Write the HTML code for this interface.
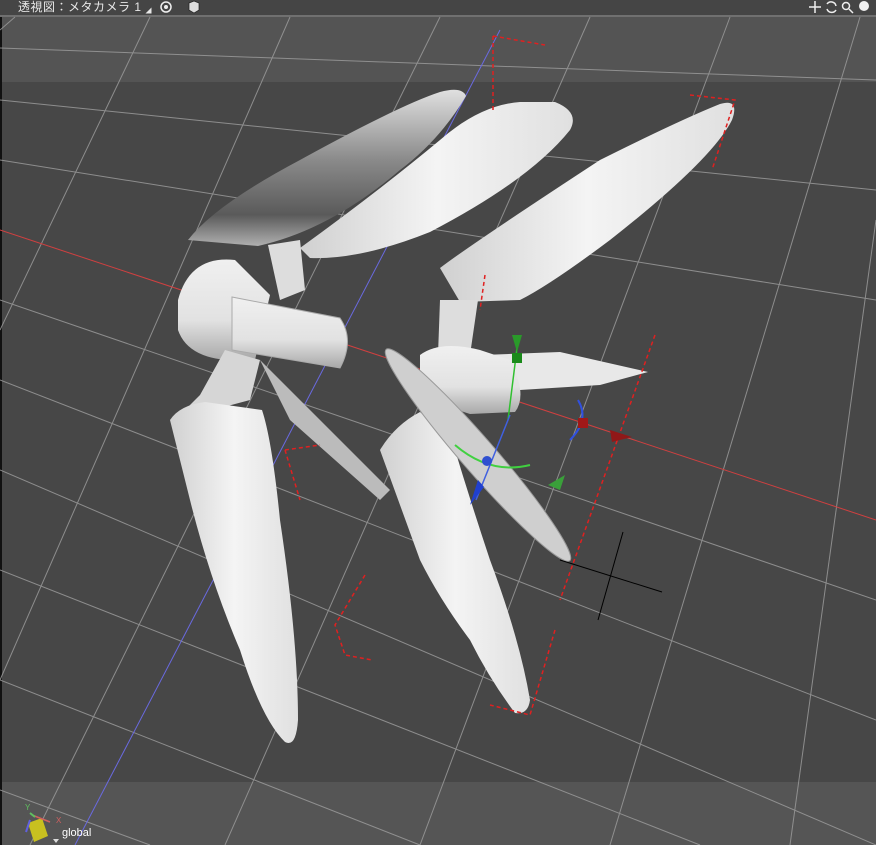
<!DOCTYPE html>
<html><head><meta charset="utf-8"><style>
html,body{margin:0;padding:0;width:876px;height:845px;overflow:hidden;background:#474747;font-family:"Liberation Sans","Noto Sans CJK JP",sans-serif}
#bar{position:absolute;left:0;top:0;width:876px;height:15px;background:#454545;border-bottom:2px solid #707070}
#bar .t{position:absolute;left:18px;top:0;font-size:12px;color:#e8e8e8;line-height:14px;letter-spacing:0.5px}
#bar .s{font-size:6px;vertical-align:-2px;margin-left:4px}
svg{position:absolute;left:0;top:0}
#g{position:absolute;left:62px;top:827px;color:#fff;font-size:11px}
</style></head><body>
<div id="bar"><span class="t">透視図：メタカメラ 1<span class="s">◢</span></span></div>
<svg width="876" height="845" viewBox="0 0 876 845">
<defs>
<linearGradient id="dk" x1="0" y1="0" x2="0" y2="1"><stop offset="0" stop-color="#e0e0e0"/><stop offset=".45" stop-color="#8a8a8a"/><stop offset=".8" stop-color="#5a5a5a"/><stop offset="1" stop-color="#b0b0b0"/></linearGradient>
<linearGradient id="wh" x1="0" y1="0" x2="1" y2="0"><stop offset="0" stop-color="#d0d0d0"/><stop offset=".5" stop-color="#f4f4f4"/><stop offset="1" stop-color="#e0e0e0"/></linearGradient>
<linearGradient id="hub" x1="0" y1="0" x2="0" y2="1"><stop offset="0" stop-color="#f0f0f0"/><stop offset=".6" stop-color="#e2e2e2"/><stop offset="1" stop-color="#a8a8a8"/></linearGradient>
</defs>
<rect x="0" y="17" width="876" height="65" fill="#545454"/>
<rect x="0" y="782" width="876" height="63" fill="#555"/>
<rect x="0" y="17" width="2" height="828" fill="#111"/>
<g stroke="#9a9a9a" stroke-width="1" fill="none" opacity=".85">
<line x1="0" y1="48" x2="876" y2="80"/>
<line x1="0" y1="100" x2="876" y2="190"/>
<line x1="0" y1="160" x2="876" y2="300"/>
<line x1="0" y1="300" x2="876" y2="600"/>
<line x1="0" y1="380" x2="876" y2="720"/>
<line x1="0" y1="470" x2="876" y2="845"/>
<line x1="0" y1="570" x2="700" y2="845"/>
<line x1="0" y1="680" x2="420" y2="845"/>
<line x1="0" y1="790" x2="150" y2="845"/>
<line x1="15" y1="17" x2="0" y2="30"/>
<line x1="150" y1="17" x2="0" y2="330"/>
<line x1="290" y1="17" x2="0" y2="680"/>
<line x1="440" y1="17" x2="30" y2="845"/>
<line x1="590" y1="17" x2="225" y2="845"/>
<line x1="730" y1="17" x2="420" y2="845"/>
<line x1="860" y1="17" x2="610" y2="845"/>
<line x1="876" y1="220" x2="790" y2="845"/>
</g>
<line x1="0" y1="230" x2="876" y2="520" stroke="#d04040" stroke-width="1"/>
<line x1="500" y1="30" x2="75" y2="845" stroke="#6a6ae0" stroke-width="1"/>
<path d="M300,248 Q380,190 440,140 Q480,105 520,102 L555,102 Q580,112 570,130 Q530,180 430,232 Q360,260 310,258 Z" fill="url(#wh)"/>
<path d="M188,240 Q215,205 300,160 Q400,105 440,92 Q462,86 466,96 Q440,140 400,170 Q330,230 258,246 Z" fill="url(#dk)"/>
<path d="M268,245 L300,240 L305,290 L280,300 Z" fill="#ddd"/>
<path d="M178,300 Q190,255 235,260 L270,295 L255,360 Q190,365 178,330 Z" fill="url(#hub)"/>
<path d="M232,297 L340,318 Q355,340 340,368 L232,350 Z" fill="url(#hub)" stroke="#aaa"/>
<path d="M225,350 L260,360 L250,400 L175,420 L200,395 Z" fill="#d6d6d6"/>
<path d="M170,420 Q180,405 205,402 L262,410 Q272,440 280,520 Q298,640 298,720 Q296,748 285,742 Q262,720 240,650 Q210,580 190,500 Z" fill="url(#wh)"/>
<path d="M260,360 L300,400 L390,490 L380,500 L290,420 Z" fill="#bbb"/>
<path d="M440,268 Q470,245 600,160 Q680,120 720,104 Q740,98 732,120 Q712,160 610,240 Q550,285 520,300 L460,302 Z" fill="url(#wh)"/>
<path d="M440,300 L478,300 L470,355 L438,355 Z" fill="#ddd"/>
<path d="M455,356 L560,352 L648,372 L600,385 L520,390 L460,380 Z" fill="#e8e8e8"/>
<path d="M420,355 Q440,340 480,350 L510,360 Q528,395 515,412 L470,414 Q425,400 420,380 Z" fill="url(#hub)"/>
<path d="M380,450 Q395,425 420,412 L452,440 Q470,500 490,560 Q520,640 530,700 Q528,715 515,713 Q490,680 470,640 Q440,600 420,560 Z" fill="url(#wh)"/>
<ellipse cx="478" cy="455" rx="140" ry="17" transform="rotate(49 478 455)" fill="#cfcfcf" stroke="#999"/>
<g stroke="#e02020" stroke-width="1.5" stroke-dasharray="4,3" fill="none">
<path d="M493,36 L545,45 M493,36 L493,110"/>
<path d="M690,95 L735,100 L712,170"/>
<path d="M655,335 L560,600"/>
<path d="M555,630 L530,715 L490,705"/>
<path d="M285,450 L300,500 M285,450 L320,445"/>
<path d="M365,575 L335,625 L345,655 L372,660"/>
<path d="M485,275 L480,310"/>
</g>
<line x1="518" y1="340" x2="508" y2="420" stroke="#30c030" stroke-width="1.5"/>
<path d="M512,335 L522,335 L517,352 Z" fill="#2a9a2a"/>
<rect x="512" y="353" width="10" height="10" fill="#1a8a1a"/>
<path d="M455,445 Q490,475 530,465" stroke="#40d040" stroke-width="2" fill="none"/>
<path d="M548,485 L565,475 L560,490 Z" fill="#3aa03a"/>
<line x1="510" y1="415" x2="476" y2="500" stroke="#4060e0" stroke-width="1.5"/>
<circle cx="487" cy="461" r="5" fill="#3050d0"/>
<path d="M470,505 L478,480 L484,487 Z" fill="#2040d0"/>
<path d="M578,400 Q590,420 570,440" stroke="#3050e0" stroke-width="2" fill="none"/>
<rect x="578" y="418" width="10" height="10" fill="#a01818"/>
<path d="M610,430 L632,437 L612,442 Z" fill="#901818"/>
<line x1="560" y1="560" x2="662" y2="592" stroke="#000" stroke-width="1"/>
<line x1="623" y1="532" x2="598" y2="620" stroke="#000" stroke-width="1"/>
<path d="M28,823 L42,818 L48,836 L34,842 Z" fill="#c8c020"/>
<line x1="32" y1="815" x2="50" y2="822" stroke="#d06060" stroke-width="1.5"/>
<line x1="30" y1="813" x2="35" y2="817" stroke="#60c060" stroke-width="2"/>
<line x1="30" y1="820" x2="26" y2="832" stroke="#6060e0" stroke-width="2"/>
<text x="25" y="810" fill="#60c060" font-size="8" font-family="Liberation Sans">Y</text>
<text x="56" y="823" fill="#d06060" font-size="8" font-family="Liberation Sans">X</text>
<path d="M53,839 L59,839 L56,843 Z" fill="#ddd"/>
<circle cx="166" cy="7" r="5" fill="none" stroke="#eee" stroke-width="1.5"/><circle cx="166" cy="7" r="2" fill="#eee"/>
<path d="M189,3 L194,1 L199,3 L199,10 L194,13 L189,10 Z" fill="#ddd" stroke="#222" stroke-width=".7"/>
<g stroke="#eee" stroke-width="1.5" fill="none">
<path d="M815,1 L815,13 M809,7 L821,7"/>
<path d="M827,4 A5,5 0 0 1 836,6 M836,10 A5,5 0 0 1 827,9"/>
<circle cx="846" cy="6" r="3.5"/><path d="M849,9 L853,13"/>
</g>
<circle cx="864" cy="6" r="5" fill="#f0f0f0"/>
</svg>
<div id="g">global</div>
</body></html>
